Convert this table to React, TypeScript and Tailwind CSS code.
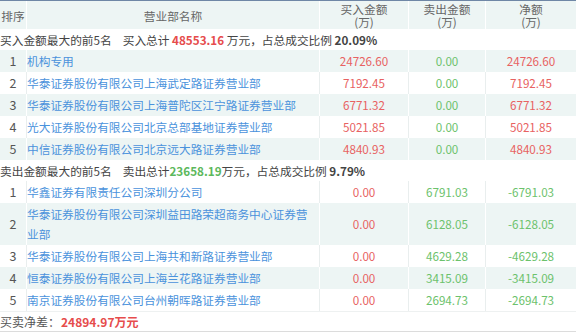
import React from "react";

const buyRows = [
  { n: 1, name: "机构专用", buy: "24726.60", sell: "0.00", net: "24726.60" },
  { n: 2, name: "华泰证券股份有限公司上海武定路证券营业部", buy: "7192.45", sell: "0.00", net: "7192.45" },
  { n: 3, name: "华泰证券股份有限公司上海普陀区江宁路证券营业部", buy: "6771.32", sell: "0.00", net: "6771.32" },
  { n: 4, name: "光大证券股份有限公司北京总部基地证券营业部", buy: "5021.85", sell: "0.00", net: "5021.85" },
  { n: 5, name: "中信证券股份有限公司北京远大路证券营业部", buy: "4840.93", sell: "0.00", net: "4840.93" },
];

const sellRows = [
  { n: 1, name: "华鑫证券有限责任公司深圳分公司", buy: "0.00", sell: "6791.03", net: "-6791.03" },
  { n: 2, name: "华泰证券股份有限公司深圳益田路荣超商务中心证券营业部", buy: "0.00", sell: "6128.05", net: "-6128.05" },
  { n: 3, name: "华泰证券股份有限公司上海共和新路证券营业部", buy: "0.00", sell: "4629.28", net: "-4629.28" },
  { n: 4, name: "恒泰证券股份有限公司上海兰花路证券营业部", buy: "0.00", sell: "3415.09", net: "-3415.09" },
  { n: 5, name: "南京证券股份有限公司台州朝晖路证券营业部", buy: "0.00", sell: "2694.73", net: "-2694.73" },
];

const RED = "text-[#e86262]";
const GREEN = "text-[#6cc26c]";

function Row({
  r,
  teal,
  buyColor,
  sellColor,
  netColor,
  tall,
}: {
  r: { n: number; name: string; buy: string; sell: string; net: string };
  teal: boolean;
  buyColor: string;
  sellColor: string;
  netColor: string;
  tall?: boolean;
}) {
  const bg = teal ? "bg-[#edf5f4]" : "bg-white";
  const bd = teal ? "border-white" : "border-[#e9eeee]";
  return (
    <div className={`grid grid-cols-[27px_293px_89px_77px_90px] ${bg} ${tall ? "h-[42px]" : "h-[22px]"}`}>
      <div className={`flex items-center justify-center border-r ${bd} text-[#555] text-[12.5px]`}>{r.n}</div>
      <div className={`flex items-center border-r ${bd} text-[#4a92dc] leading-[20px] pr-1`}>{r.name}</div>
      <div className={`flex items-center justify-center border-r ${bd} ${buyColor}`}>{r.buy}</div>
      <div className={`flex items-center justify-center border-r ${bd} ${sellColor}`}>{r.sell}</div>
      <div className={`flex items-center justify-center ${netColor}`}>{r.net}</div>
    </div>
  );
}

export default function App() {
  return (
    <div
      className="w-[576px] h-[334px] bg-white overflow-hidden text-[11.7px] text-[#444]"
      style={{ fontFamily: '"Noto Sans CJK SC", "Noto Sans", sans-serif' }}
    >
      {/* header */}
      <div className="grid grid-cols-[27px_293px_89px_77px_90px] h-[29px] bg-[#edf5f4] border-t border-[#6f87a6] text-[#666] leading-[13px]">
        <div className="flex items-center justify-center border-r border-white">排序</div>
        <div className="flex items-center justify-center border-r border-white">营业部名称</div>
        <div className="flex items-center justify-center text-center border-r border-white">
          <span>
            买入金额
            <br />
            (万)
          </span>
        </div>
        <div className="flex items-center justify-center text-center border-r border-white">
          <span>
            卖出金额
            <br />
            (万)
          </span>
        </div>
        <div className="flex items-center justify-center text-center">
          <span>
            净额
            <br />
            (万)
          </span>
        </div>
      </div>

      {/* buy section header */}
      <div className="h-[21px] flex items-center whitespace-pre text-[#444]">
        <span>买入金额最大的前5名</span>
        <span className="ml-[11px]">买入总计 </span>
        <span className="font-bold text-[#e64c4c]">48553.16</span>
        <span> 万元，占总成交比例 </span>
        <span className="font-bold">20.09%</span>
      </div>

      {buyRows.map((r, i) => (
        <Row key={r.n} r={r} teal={i % 2 === 0} buyColor={RED} sellColor={GREEN} netColor={RED} />
      ))}

      {/* sell section header */}
      <div className="h-[21px] flex items-center whitespace-pre text-[#444]">
        <span>卖出金额最大的前5名</span>
        <span className="ml-[11px]">卖出总计</span>
        <span className="font-bold text-[#5cb85c]">23658.19</span>
        <span>万元，占总成交比例 </span>
        <span className="font-bold">9.79%</span>
      </div>

      {sellRows.map((r, i) => (
        <Row
          key={r.n}
          r={r}
          teal={i % 2 === 1}
          buyColor={RED}
          sellColor={GREEN}
          netColor={GREEN}
          tall={r.n === 2}
        />
      ))}

      {/* footer */}
      <div className="h-[21px] flex items-center border-t border-[#eef1f1] border-b border-b-[#dcdcdc] text-[12px]">
        <span className="text-[#555]">买卖净差：</span>
        <span className="font-bold text-[#e64c4c] ml-[1px]">24894.97万元</span>
      </div>
    </div>
  );
}
